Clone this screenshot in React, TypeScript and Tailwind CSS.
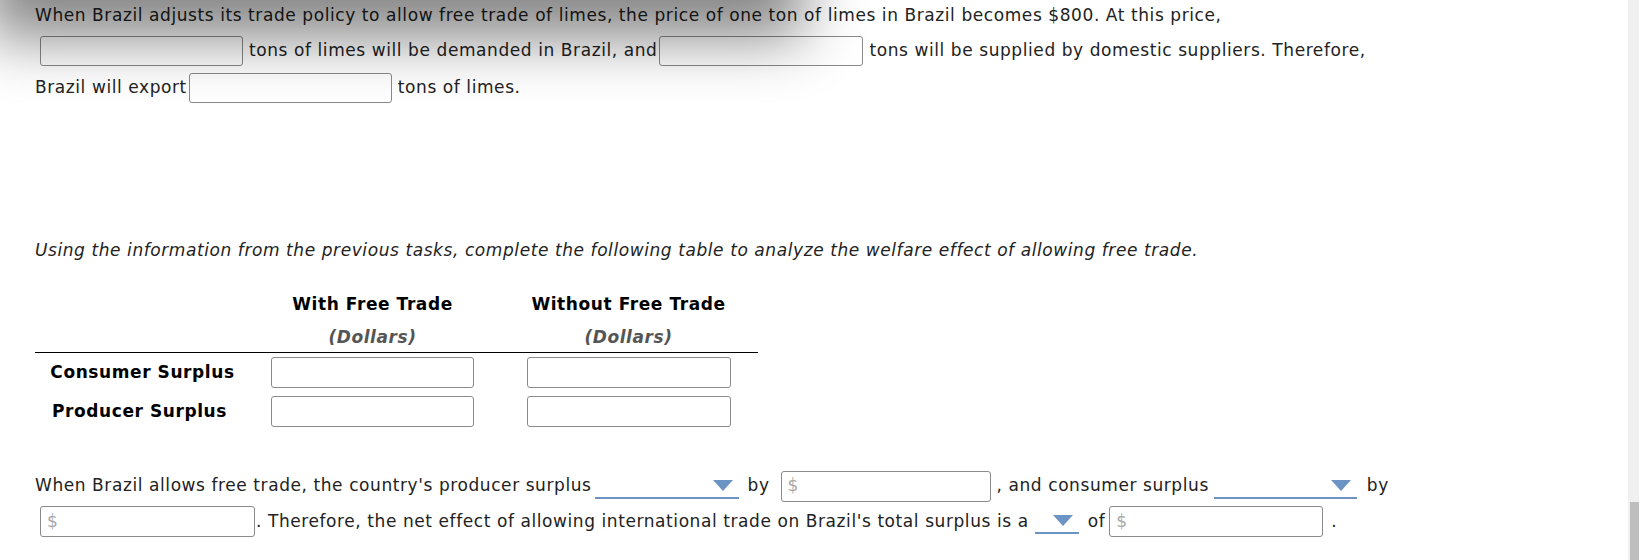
import type { ReactNode } from "react";

const font = { fontFamily: "'DejaVu Sans', Verdana, sans-serif" };

function Blank({ className = "", dollar = false }: { className?: string; dollar?: boolean }) {
  return (
    <span
      className={`inline-flex items-center h-[31px] bg-white border border-[#8a8a8a] rounded-[3px] pl-[6px] text-[#a8a8a8] shrink-0 ${className}`}
    >
      {dollar ? "$" : ""}
    </span>
  );
}

function Dropdown({ width }: { width: string }) {
  return (
    <span className={`relative inline-block h-[24px] self-end mb-[5px] border-b-2 border-[#6b93c3] shrink-0 ${width}`}>
      <svg className="absolute right-[6px] top-[5px]" width="20" height="11" viewBox="0 0 20 11">
        <path d="M0 0 H20 L10 11 Z" fill="#6b93c3" />
      </svg>
    </span>
  );
}

function Row({ className = "", children }: { className?: string; children: ReactNode }) {
  return <div className={`flex items-center whitespace-pre ${className}`}>{children}</div>;
}

export default function App() {
  return (
    <div
      className="relative flex w-full h-[560px] overflow-hidden bg-white text-[17px] tracking-[0.58px] text-[#222]"
      style={font}
    >
      {/* shadow cast by an overlay above the page */}
      <div className="absolute left-[25px] top-[-50px] w-[740px] h-[50px] shadow-[0_0_60px_38px_rgba(0,0,0,0.48)] pointer-events-none" />

      <div className="flex-1 pl-[35px]">
        <Row className="h-[32px]">
          When Brazil adjusts its trade policy to allow free trade of limes, the price of one ton of limes in Brazil becomes $800. At this price,
        </Row>
        <Row className="h-[38px]">
          <Blank className="ml-[5px] mr-[6px] w-[203px] !h-[30px]" />
          tons of limes will be demanded in Brazil, and
          <Blank className="ml-[2px] mr-[6px] w-[204px] !h-[30px]" />
          tons will be supplied by domestic suppliers. Therefore,
        </Row>
        <Row className="h-[35px] pt-px">
          Brazil will export
          <Blank className="ml-[2px] mr-[6px] w-[203px] !h-[30px]" />
          tons of limes.
        </Row>

        <Row className="h-[30px] mt-[131px] italic">
          Using the information from the previous tasks, complete the following table to analyze the welfare effect of allowing free trade.
        </Row>

        <div className="w-[723px] mt-[23px]">
          <div className="grid grid-cols-[236px_256px_231px] border-b border-black">
            <div />
            <div className="w-[203px] h-[31px] flex items-center justify-center font-bold text-black">With Free Trade</div>
            <div className="w-[203px] h-[31px] flex items-center justify-center font-bold text-black whitespace-nowrap">Without Free Trade</div>
            <div />
            <div className="w-[203px] h-[32px] pt-[3px] flex items-center justify-center font-bold italic text-[#555]">(Dollars)</div>
            <div className="w-[203px] h-[32px] pt-[3px] flex items-center justify-center font-bold italic text-[#555]">(Dollars)</div>
          </div>
          <div className="grid grid-cols-[236px_256px_231px] grid-rows-[39px_39px] items-center">
            <div className="w-[215px] text-center font-bold text-black whitespace-nowrap">Consumer Surplus</div>
            <Blank className="w-[203px]" />
            <Blank className="w-[204px]" />
            <div className="w-[215px] pr-[6px] text-center font-bold text-black whitespace-nowrap">Producer Surplus</div>
            <Blank className="w-[203px]" />
            <Blank className="w-[204px]" />
          </div>
        </div>

        <Row className="h-[36px] mt-[37px]">
          When Brazil allows free trade, the country's producer surplus
          <Dropdown width="w-[144px] ml-[3px] mr-[9px]" />
          by
          <Blank dollar className="ml-[11px] mr-[6px] w-[210px]" />
          , and consumer surplus
          <Dropdown width="w-[143px] ml-[5px] mr-[10px]" />
          by
        </Row>
        <Row className="h-[35px]">
          <Blank dollar className="ml-[5px] mr-[1px] w-[215px]" />
          . Therefore, the net effect of allowing international trade on Brazil's total surplus is a
          <Dropdown width="w-[44px] ml-[6px] mr-[9px]" />
          of
          <Blank dollar className="ml-[4px] mr-[8px] w-[214px]" />.
        </Row>
      </div>

      <div className="w-[11px] h-full bg-[#f0f0f0] flex flex-col shrink-0">
        <div className="flex-1" />
        <div className="ml-[2px] h-[58px] bg-[#bebebe]" />
      </div>
    </div>
  );
}
